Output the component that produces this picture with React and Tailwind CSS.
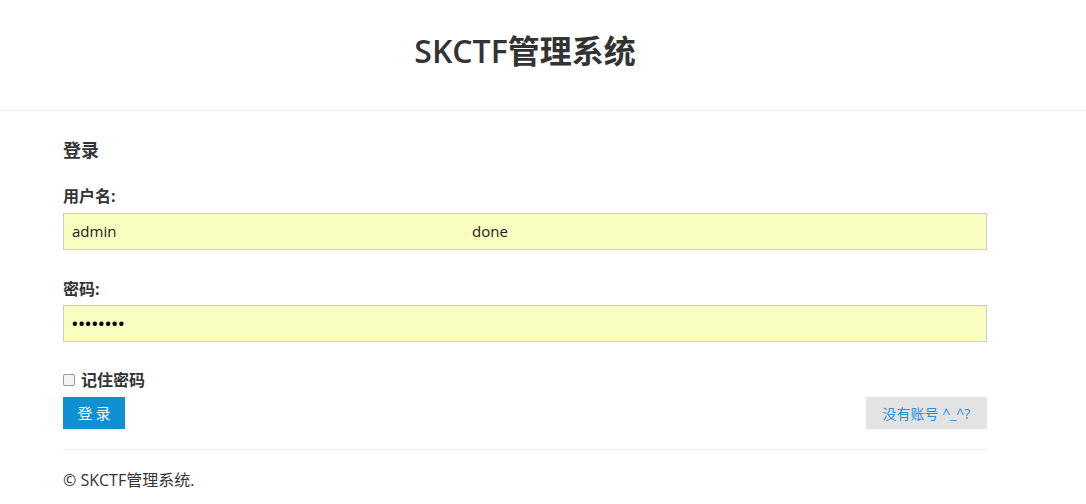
export default function App() {
  const font = { fontFamily: '"Open Sans", "Noto Sans CJK SC", sans-serif' };
  return (
    <div className="w-[1086px] h-[504px] bg-white text-[#333] overflow-hidden" style={font}>
      <header className="h-[111px] border-b border-[#eeeeee]">
        <div className="mx-[63px] w-[924px] h-full flex items-center justify-center">
          <h1 className="text-[32px] font-semibold text-[#333] leading-none -mt-[8px]">SKCTF管理系统</h1>
        </div>
      </header>
      <div className="mx-[63px] w-[924px]">
        <h2 className="text-[18px] font-bold leading-none mt-[30px]">登录</h2>
        <label className="block text-[16px] font-bold leading-none mt-[29px]">用户名:</label>
        <div className="mt-[9px] h-[37px] border border-[#cccccc] bg-[#fafdc0] flex items-center text-[15px] text-[#222]">
          <span className="pl-[8px] w-[408px]">admin</span>
          <span>done</span>
        </div>
        <label className="block text-[16px] font-bold leading-none mt-[31px]">密码:</label>
        <div className="mt-[8px] h-[37px] border border-[#cccccc] bg-[#fafdc0] flex items-center text-[15px] text-black">
          <span className="pl-[8px] tracking-[1px] font-bold">••••••••</span>
        </div>
        <div className="mt-[28px] flex items-center h-[20px]">
          <span className="w-[12px] h-[12px] border border-[#999] rounded-[2px] bg-[#f3f3f3]"></span>
          <span className="ml-[6px] text-[16px] font-bold leading-none">记住密码</span>
        </div>
        <div className="mt-[7px] flex justify-between">
          <button className="w-[62px] h-[32px] bg-[#0e90d2] text-white text-[15px] tracking-[3px] pl-[3px]">登录</button>
          <button className="w-[121px] h-[32px] bg-[#e3e3e3] text-[#2a8ed4] text-[14px]">没有账号 ^_^?</button>
        </div>
        <div className="mt-[20px] border-t border-[#eeeeee]"></div>
        <p className="mt-[22px] text-[16px] text-[#333] leading-none">© SKCTF管理系统.</p>
      </div>
    </div>
  );
}
